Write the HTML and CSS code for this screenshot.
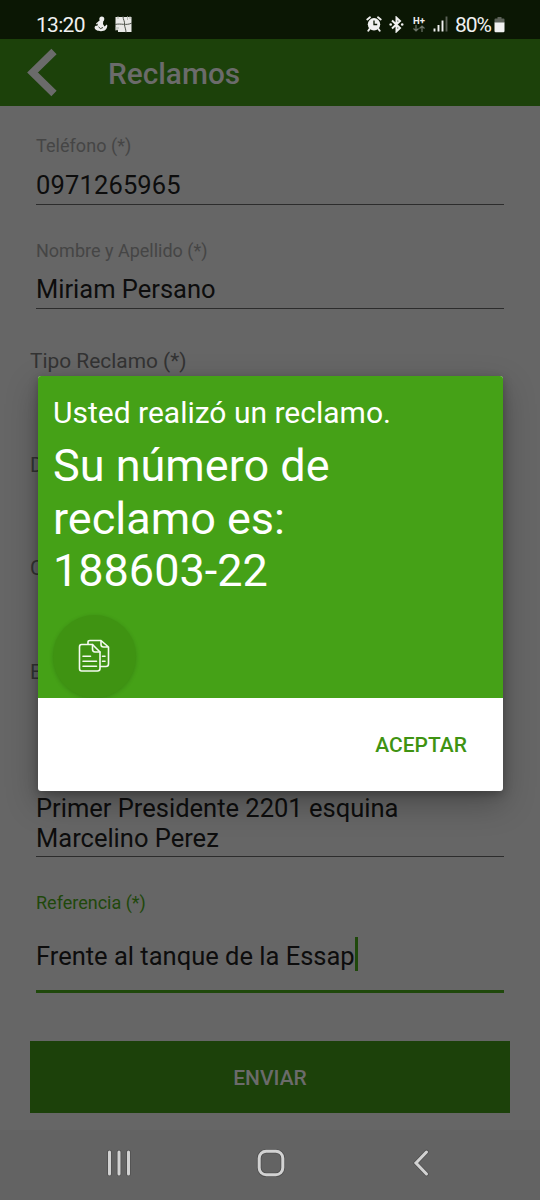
FILE: index.html
```html
<!DOCTYPE html>
<html lang="es">
<head>
<meta charset="utf-8">
<title>Reclamos</title>
<link rel="stylesheet" href="styles.css">
</head>
<body>
<div class="screen">
  <div class="status">
    <span class="clock">13:20</span>
    <svg class="ic-person" width="14" height="16" viewBox="0 0 14 16"><circle cx="7.800" cy="3" r="2.500" fill="#eee"/><path d="M5.500 4.500H9.300L9 8L10.500 10.500L12.800 8.500L13.300 9.500C13 13.500 11 15.200 7 15.200C3 15.200 .6 13.500 .6 11.500C.6 10 2 9.500 3.200 10L4 7.500L2.500 8.500L2 7.500Z" fill="#eee"/><path d="M4.500 10.800L6.500 12.600L9 11.500" fill="none" stroke="#0b1704" stroke-width=".8"/></svg>
    <svg class="ic-tiles" width="18" height="17" viewBox="0 0 18 17"><path d="M1 1H16.500V16H3V14H.5V1Z" fill="#e9e9e7"/><path d="M8 0C8 4 10 5 9.500 8.500C9.500 11 11 13 11 16.500M0 8.500C6 7 11 10 17 7" fill="none" stroke="#4c5148" stroke-width="1"/><path d="M12.500 0V4M15 0V3M0 12H4M0 14H3M3 0V3" fill="none" stroke="#9ca098" stroke-width=".7"/></svg>
    <div class="status-right">
      <svg width="16" height="16" viewBox="0 0 16 16"><circle cx="8" cy="8.300" r="6.200" fill="#f1f1f1"/><path d="M1.300 3.500L4 1.300M14.700 3.500L12 1.300M3.500 13L2.300 14.800M12.500 13L13.700 14.800" stroke="#f1f1f1" stroke-width="1.900" stroke-linecap="round"/><path d="M8 4.500V8.500H11.200" fill="none" stroke="#0b1704" stroke-width="1.300"/></svg>
      <svg class="ic-bt" width="15" height="17" viewBox="0 0 15 17"><path d="M3 4.500L11 12L7.500 15.300V1.700L11 5L3 12.500" fill="none" stroke="#f1f1f1" stroke-width="2"/><circle cx="1.700" cy="8.500" r="1.300" fill="#f1f1f1"/><circle cx="13.200" cy="8.500" r="1.300" fill="#f1f1f1"/></svg>
      <div class="net"><span class="net-type">H+</span><svg width="12" height="7" viewBox="0 0 12 7"><path d="M3 0V6M.5 3.500L3 6L5.500 3.500M9 7V1M6.500 3.500L9 1L11.500 3.500" fill="none" stroke="#6d7469" stroke-width="1.200"/></svg></div>
      <svg class="ic-signal" width="15" height="16" viewBox="0 0 15 16"><path d="M1.500 12.500V15.500M5.500 9V15.500M9.500 4.500V15.500" stroke="#f1f1f1" stroke-width="1.900"/><path d="M13.500 .5V15.500" stroke="#5a6156" stroke-width="1.900"/></svg>
      <span class="pct">80%</span>
      <svg class="ic-batt" width="11" height="17" viewBox="0 0 11 17"><path d="M3.500 1H7.500V2.500H9.500Q10.500 2.500 10.500 3.500V7H.5V3.500Q.5 2.500 1.500 2.500H3.500Z" fill="#5d6259"/><path d="M.5 6.500H10.500V15Q10.500 16.300 9.300 16.300H1.700Q.5 16.300 .5 15Z" fill="#f1f1f1"/></svg>
    </div>
  </div>
  <header class="bar">
    <svg class="back" width="30" height="49" viewBox="0 0 30 49"><path d="M27 3.500L5.500 24.500L27 45.500" fill="none" stroke="#6b6b6b" stroke-width="7.500"/></svg>
    <h1 class="title">Reclamos</h1>
  </header>
  <main class="form">
    <div class="field">
      <label class="label phone">Teléfono (*)</label>
      <div class="value digits">0971265965</div>
    </div>
    <div class="field">
      <label class="label name">Nombre y Apellido (*)</label>
      <div class="value">Miriam Persano</div>
    </div>
    <div class="pickers">
      <div class="picker">Tipo Reclamo (*)</div>
      <div class="picker">D</div>
      <div class="picker">C</div>
      <div class="picker">E</div>
    </div>
    <div class="value address">Primer Presidente 2201 esquina<br>Marcelino Perez</div>
    <div class="reference">
      <label class="label active">Referencia (*)</label>
      <div class="value focused"><span>Frente al tanque de la Essap</span><i class="caret"></i></div>
    </div>
    <button class="send">ENVIAR</button>
  </main>
  <nav class="nav">
    <svg width="28" height="30" viewBox="0 0 28 30"><path d="M4.500 4V26M14 4V26M23.500 4V26" stroke="#505050" stroke-width="4.600" stroke-linecap="round"/><path d="M4.500 4V26M14 4V26M23.500 4V26" stroke="#d2d2d2" stroke-width="3" stroke-linecap="round"/></svg>
    <svg class="home" width="30" height="30" viewBox="0 0 30 30"><rect x="3.200" y="3.200" width="23.600" height="23.600" rx="7" fill="none" stroke="#505050" stroke-width="4.600"/><rect x="3.200" y="3.200" width="23.600" height="23.600" rx="7" fill="none" stroke="#d2d2d2" stroke-width="3"/></svg>
    <svg width="20" height="30" viewBox="0 0 20 30"><path d="M15.500 4L5 15L15.500 26" fill="none" stroke="#505050" stroke-width="4.600" stroke-linecap="round"/><path d="M15.500 4L5 15L15.500 26" fill="none" stroke="#d2d2d2" stroke-width="3" stroke-linecap="round"/></svg>
  </nav>
  <div class="dialog" role="dialog">
    <div class="message">
      <p class="intro">Usted realizó un reclamo.</p>
      <p class="number">Su número de<br>reclamo es:<br>188603-22</p>
      <div class="copy">
        <svg width="32" height="34" viewBox="0 0 32 34"><g fill="none" stroke="#f4faf0" stroke-width="1.600" stroke-linejoin="round" stroke-linecap="round"><path d="M3.500 5.500H14.500L22 13V29.500Q22 32 19.500 32H3.500Q1.500 32 1.500 29.500V8Q1.500 5.500 3.500 5.500Z"/><path d="M14.500 5.500V10Q14.500 13 17 13H22"/><path d="M10 5V3Q10 1.500 12 1.500H23L30.500 8V25Q30.500 27.500 28 27.500H22.500M23 1.500V5.500Q23 8 25.500 8H30.500"/><path d="M5 17.300H12.500M5 22.300H18.500M5 27.300H18.500M24.500 17.300H27M24.500 22.300H27"/></g></svg>
      </div>
    </div>
    <div class="actions"><button class="accept">ACEPTAR</button></div>
  </div>
</div>
</body>
</html>
```
FILE: styles.css
```css
* { box-sizing: border-box; margin: 0; padding: 0; }
body { font-family: Roboto, sans-serif; background: #666; }
button { border: 0; background: none; font: inherit; }
svg { display: block; flex: none; }
.screen { position: relative; width: 540px; height: 1200px; display: flex; flex-direction: column; overflow: hidden; background: #666; }

.status { height: 39px; flex: none; display: flex; align-items: center; padding: 9px 35px 0 36px; background: #0b1704; color: #f1f1f1; }
.clock { font-size: 21px; line-height: 24px; letter-spacing: -.7px; width: 49px; white-space: nowrap; padding-top: 2px; }
.ic-person { margin-left: 9px; }
.ic-tiles { margin-left: 7px; }
.status-right { margin-left: auto; display: flex; align-items: center; }
.ic-bt { margin-left: 7px; }
.net { margin-left: 9px; width: 13px; height: 17px; }
.net-type { display: block; font-size: 9.5px; line-height: 9px; font-weight: 700; }
.ic-signal { margin-left: 7px; }
.pct { margin-left: 7px; padding-top: 1px; font-size: 21px; line-height: 24px; letter-spacing: -1px; width: 37px; white-space: nowrap; }
.ic-batt { margin-left: 2px; }

.bar { height: 67px; flex: none; display: flex; align-items: center; padding-left: 27px; background: #1c410a; }
.title { margin: 3px 0 0 51px; font-size: 29.8px; font-weight: 500; line-height: 36px; color: #6b6b6b; }

.form { height: 1024px; flex: none; padding: 28px 30px 0; }
.field { height: 104.5px; padding: 0 6px; }
.label { display: block; font-size: 18px; line-height: 23px; color: #454545; white-space: nowrap; }
.phone { letter-spacing: .05px; }
.value { font-size: 25.5px; line-height: 30px; color: #0d0d0d; white-space: nowrap; }
.digits { letter-spacing: .15px; }
.field .value { margin-top: 12.5px; height: 35px; border-bottom: 1px solid #2c2c2c; }
.pickers { height: 449.5px; padding-top: 5px; }
.picker { height: 103.5px; font-size: 20.9px; line-height: 26px; color: #333; white-space: nowrap; }
.address { margin: 0 6px; height: 64px; border-bottom: 1px solid #2c2c2c; }
.reference { margin: 34.5px 6px 0; height: 150px; }
.active { color: #1f480b; }
.focused { height: 80px; margin-top: -1px; padding-top: 8px; border-bottom: 3px solid #1f480b; display: flex; align-items: center; }
.caret { width: 3px; height: 34px; margin-top: -4px; background: #1f480b; }
.send { display: block; width: 480px; height: 72px; padding-top: 2px; background: #1c410a; color: #6b6b6b; font-size: 21px; font-weight: 500; }

.nav { height: 70px; flex: none; display: flex; justify-content: space-between; align-items: center; padding: 0 109px 4px 105px; background: #636363; }
.home { margin-right: 3px; }

.dialog { position: absolute; left: 37.5px; top: 376px; width: 465px; height: 414.5px; border-radius: 3px; overflow: hidden; background: #fff; box-shadow: 0 12px 32px rgba(0,0,0,.28), 0 3px 10px rgba(0,0,0,.25); }
.message { height: 321.5px; padding: 20px 15.5px 0; overflow: hidden; background: #45a117; color: #fff; }
.intro { font-size: 30px; line-height: 34px; white-space: nowrap; }
.number { margin-top: 10px; font-size: 45px; line-height: 52.5px; white-space: nowrap; }
.copy { width: 83px; height: 83px; margin-top: 17px; border-radius: 50%; display: flex; align-items: center; justify-content: center; background: #3f9312; box-shadow: 0 1px 4px rgba(0,0,0,.16); }
.copy svg { margin-right: 1px; }
.actions { height: 93px; display: flex; align-items: center; justify-content: flex-end; padding: 2px 35.5px 0 0; }
.accept { font-size: 21px; font-weight: 500; color: #3f9312; }
```
